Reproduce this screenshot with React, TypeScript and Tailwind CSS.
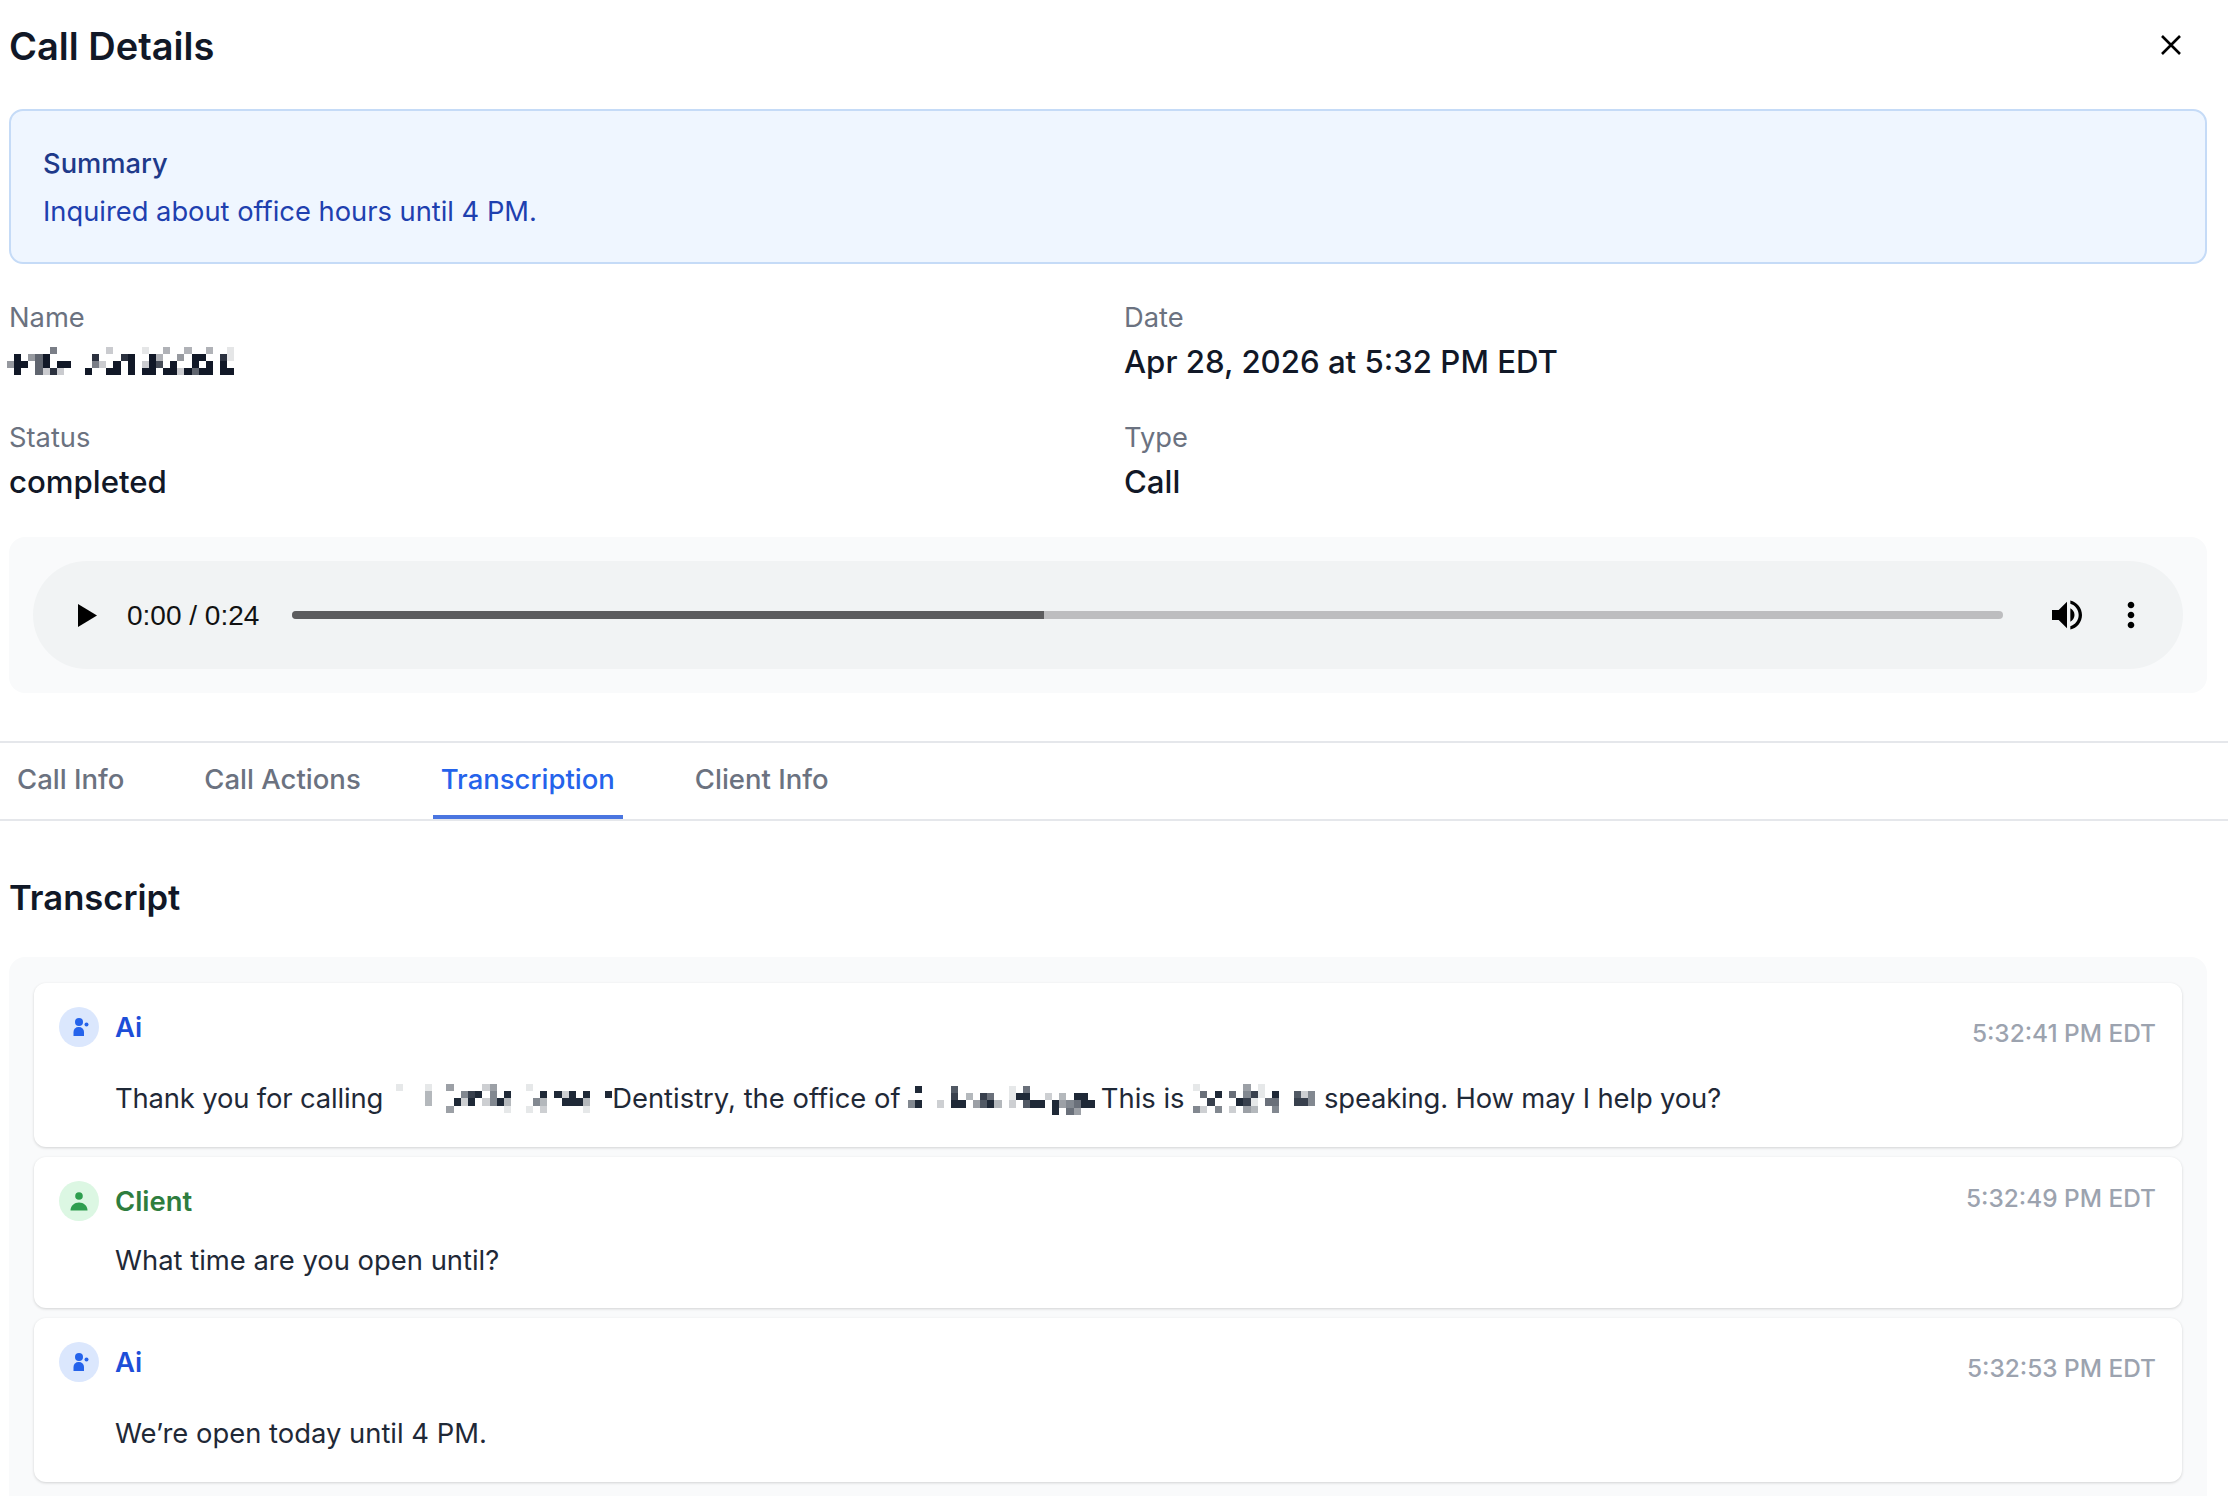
// Call details panel
type Tone = "ai" | "client";

// ---------------------------------------------------------------------------
// Redacted text: each row is a string of shades, "." is empty, 1-9 is darkness
// ---------------------------------------------------------------------------
function Redacted({
  rows,
  fill,
  cell = 7.2,
  className,
}: {
  rows: string[];
  fill: string;
  cell?: number;
  className?: string;
}) {
  const cols = Math.max(...rows.map((r) => r.length));
  return (
    <svg
      className={className}
      width={cols * cell}
      height={rows.length * cell}
      viewBox={`0 0 ${cols * cell} ${rows.length * cell}`}
      shapeRendering="crispEdges"
    >
      {rows.map((row, y) =>
        row.split("").map((c, x) =>
          c === "." ? null : (
            <rect
              key={`${x}-${y}`}
              x={x * cell}
              y={y * cell}
              width={cell}
              height={cell}
              fill={fill}
              fillOpacity={Number(c) / 9}
            />
          ),
        ),
      )}
    </svg>
  );
}

const NAME_ROWS = [
  "......5.......2....1..3..3..3..1",
  ".9.469......8...89..93..4.99..81",
  "499.69.99...52.9.9.297.9..9.9.9.",
  ".9..6282...9..99.9.99.9929699.99",
];
const PRACTICE_ROWS = [
  "1...1..4....24....1",
  "....3....589.5.9....9.929.9..9",
  "....3...929.2593...53..9993",
  ".......4.......1..1.2.....1",
];
const DOCTOR_ROWS = [
  ".9....7.......1.6",
  "......8.3.86..199..2.3.99",
  "59..2.99.4793.2.799.945699",
  "....................9.64",
];
const AGENT_ROWS = [
  "1......4.1",
  ".6.9.6.581.9..725",
  "..8...981.66..885",
  "52.5.2.43..5",
];

// ---------------------------------------------------------------------------
// Avatars
// ---------------------------------------------------------------------------
function Avatar({ tone }: { tone: Tone }) {
  if (tone === "ai") {
    return (
      <div className="h-10 w-10 shrink-0 rounded-full bg-[#dbe7fd]">
        <svg width="40" height="40" viewBox="0 0 40 40" fill="#2563eb">
          <circle cx="20" cy="15" r="4" />
          <circle cx="27.5" cy="17.5" r="2" />
          <path d="M14.5 29v-4a5 5 0 0 1 5-5h.5a5 5 0 0 1 5 5v4z" />
        </svg>
      </div>
    );
  }
  return (
    <div className="h-10 w-10 shrink-0 rounded-full bg-[#dcf7e3]">
      <svg width="40" height="40" viewBox="0 0 40 40" fill="#2e9e4f">
        <circle cx="20" cy="15" r="3.8" />
        <path d="M11.5 29.5c0-5 4-8 8.5-8s8.5 3 8.5 8z" />
      </svg>
    </div>
  );
}

// ---------------------------------------------------------------------------
// Transcript card
// ---------------------------------------------------------------------------
function TranscriptCard({
  tone,
  time,
  tall,
  children,
}: {
  tone: Tone;
  time: string;
  tall: boolean;
  children: React.ReactNode;
}) {
  return (
    <div
      className={`rounded-[12px] bg-white pl-[25px] pr-[26px] pt-6 shadow-[0_1px_3px_rgba(0,0,0,0.16)] ${
        tall ? "h-[164px]" : "h-[151px]"
      }`}
    >
      <div className="flex items-start justify-between">
        <div className="flex items-center gap-4">
          <Avatar tone={tone} />
          <span
            className={`text-[27.4px] font-semibold leading-10 ${
              tone === "ai" ? "text-[#1d4ed8]" : "text-[#2e7d3e]"
            }`}
          >
            {tone === "ai" ? "Ai" : "Client"}
          </span>
        </div>
        <span
          className={`text-[24.4px] font-medium leading-7 text-[#9ca3af] ${
            tall ? "mt-3" : "mt-[3px]"
          }`}
        >
          {time}
        </span>
      </div>
      <div
        className={`ml-[56px] whitespace-nowrap text-[27.4px] leading-9 text-[#1f2937] ${
          tall ? "mt-[33px]" : "mt-[21px]"
        }`}
      >
        {children}
      </div>
    </div>
  );
}

function Field({ label, children }: { label: string; children: React.ReactNode }) {
  return (
    <div>
      <div className="text-[27.3px] leading-10 text-[#6b7280]">{label}</div>
      <div className="mt-1 flex h-10 items-center text-[31.2px] font-medium text-[#111827]">
        {children}
      </div>
    </div>
  );
}

export default function App() {
  return (
    <div className="h-[1496px] overflow-hidden bg-white font-[Inter,sans-serif]">
      {/* Header */}
      <div className="flex h-[109px] items-start justify-between pl-[9px] pr-[47px] pt-[23px]">
        <h1 className="text-[38px] font-semibold leading-[46px] text-[#111827]">
          Call Details
        </h1>
        <svg
          className="mt-3"
          width="20"
          height="20"
          viewBox="0 0 20 20"
          stroke="#000"
          strokeWidth="2.6"
        >
          <path d="M1 1l18 18M19 1L1 19" />
        </svg>
      </div>

      {/* Summary */}
      <div className="ml-[9px] mr-[21px] h-[155px] rounded-[14px] border-2 border-[#c5dbf7] bg-[#eff6ff] pl-[32px] pt-[33px]">
        <div className="text-[27.3px] font-medium leading-10 text-[#1e3a8a]">
          Summary
        </div>
        <div className="mt-2 text-[27.3px] leading-10 text-[#1e40af]">
          Inquired about office hours until 4 PM.
        </div>
      </div>

      {/* Details */}
      <div className="ml-[9px] mr-[21px] mt-[34px] grid grid-cols-2 gap-x-[32px] gap-y-[36px]">
        <Field label="Name">
          <Redacted rows={NAME_ROWS} fill="#111827" cell={7.1} className="-ml-[2px] -mt-[2px]" />
        </Field>
        <Field label="Date">Apr 28, 2026 at 5:32 PM EDT</Field>
        <Field label="Status">completed</Field>
        <Field label="Type">Call</Field>
      </div>

      {/* Audio player */}
      <div className="ml-[9px] mr-[21px] mt-[35px] h-[156px] rounded-[16px] bg-[#f9fafb] px-6 py-6">
        <div className="flex h-[108px] items-center rounded-full bg-[#f1f3f4] pl-[45px] pr-[32px] font-['Liberation_Sans',sans-serif]">
          <svg width="19" height="23" viewBox="0 0 19 23">
            <path d="M0 0l19 11.5L0 23z" fill="#000" />
          </svg>
          <span className="ml-[30px] mt-[2px] text-[28px] text-[#111]">0:00 / 0:24</span>
          <div className="ml-[33px] h-2 flex-1 overflow-hidden rounded-full bg-[#bdbdbf]">
            <div className="h-full bg-[#5c5c5e]" style={{ width: `${(752 / 1711) * 100}%` }} />
          </div>
          <svg className="ml-[44px]" width="40" height="40" viewBox="0 0 24 24" fill="#000">
            <path d="M3 9v6h4l5 5V4L7 9H3zm13.5 3c0-1.77-1.02-3.29-2.5-4.03v8.05c1.48-.73 2.5-2.25 2.5-4.02zM14 3.23v2.06c2.89.86 5 3.54 5 6.71s-2.11 5.85-5 6.71v2.06c4.01-.91 7-4.49 7-8.77s-2.99-7.86-7-8.77z" />
          </svg>
          <svg className="ml-6" width="40" height="40" viewBox="0 0 24 24" fill="#000">
            <path d="M12 8c1.1 0 2-.9 2-2s-.9-2-2-2-2 .9-2 2 .9 2 2 2zm0 2c-1.1 0-2 .9-2 2s.9 2 2 2 2-.9 2-2-.9-2-2-2zm0 6c-1.1 0-2 .9-2 2s.9 2 2 2 2-.9 2-2-.9-2-2-2z" />
          </svg>
        </div>
      </div>

      {/* Tabs */}
      <div className="mt-[48px] flex h-[80px] gap-[64px] border-y-2 border-[#e5e7eb] pl-[9px]">
        {["Call Info", "Call Actions", "Transcription", "Client Info"].map((t) => (
          <div
            key={t}
            className={`flex h-[76px] items-center border-b-[4px] px-2 pt-[1px] text-[27.5px] font-medium ${
              t === "Transcription"
                ? "border-[#4a75e0] text-[#2563eb]"
                : "border-transparent text-[#6b7280]"
            }`}
          >
            {t}
          </div>
        ))}
      </div>

      {/* Transcript */}
      <h2 className="ml-[9px] mt-[54px] text-[34.6px] font-semibold leading-[44px] text-[#111827]">
        Transcript
      </h2>
      <div className="ml-[9px] mr-[21px] mt-[38px] flex flex-col gap-[10px] rounded-t-[16px] bg-[#f9fafb] px-[25px] pb-6 pt-[26px]">
        <TranscriptCard tone="ai" time="5:32:41 PM EDT" tall>
          <span className="tracking-[-0.15px]">Thank you for calling</span>
          <Redacted rows={PRACTICE_ROWS} fill="#1f2937" className="ml-[13px] inline-block align-[-5px]" />
          Dentistry, the office of
          <Redacted rows={DOCTOR_ROWS} fill="#1f2937" className="ml-[7px] mr-[6px] inline-block align-[-7px]" />
          This is
          <Redacted rows={AGENT_ROWS} fill="#1f2937" className="ml-[8px] mr-[9px] inline-block align-[-5px]" />
          <span className="tracking-[-0.15px]">speaking. How may I help you?</span>
        </TranscriptCard>
        <TranscriptCard tone="client" time="5:32:49 PM EDT" tall={false}>
          What time are you open until?
        </TranscriptCard>
        <TranscriptCard tone="ai" time="5:32:53 PM EDT" tall>
          We’re open today until 4 PM.
        </TranscriptCard>
      </div>
    </div>
  );
}
